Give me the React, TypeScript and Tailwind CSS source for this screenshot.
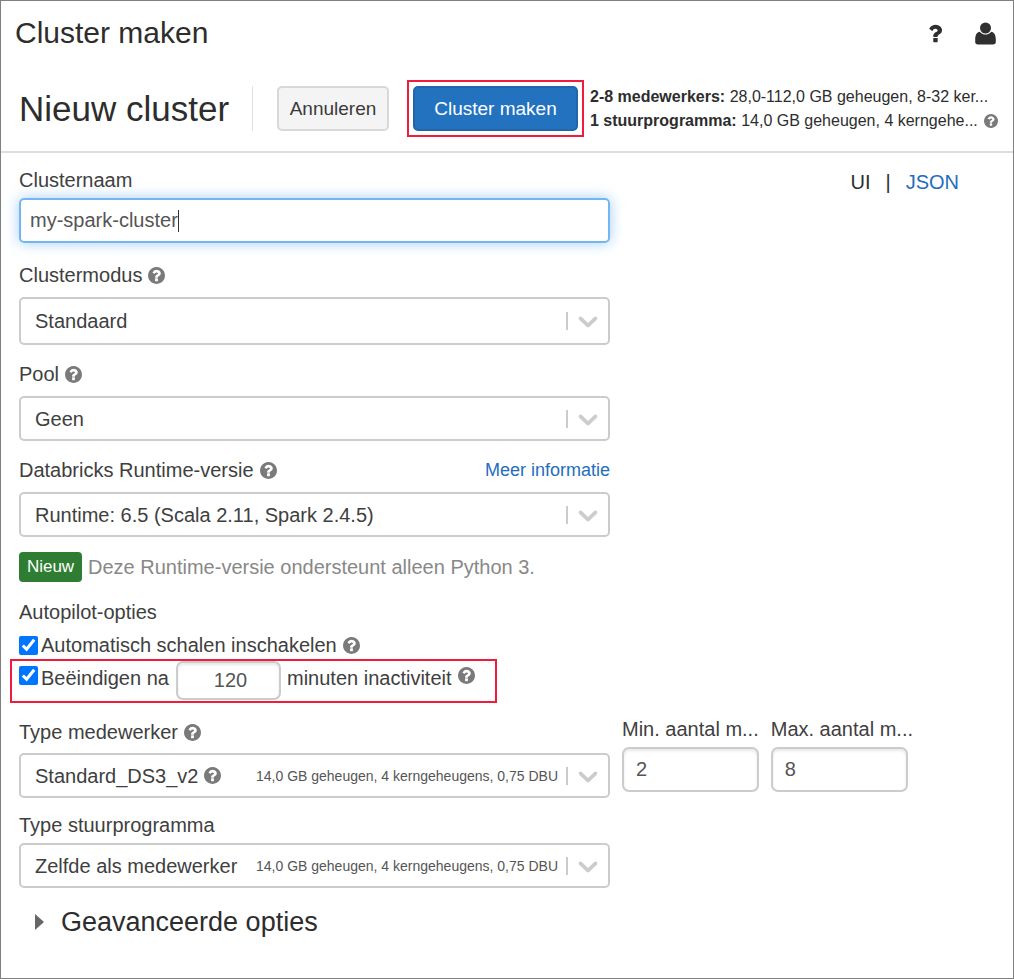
import type { ReactNode } from "react";

const FIELD_TEXT = "text-[#404040] text-[20px] leading-6";

function HelpIcon({ small = false }: { small?: boolean }) {
  return (
    <svg
      viewBox="128 128 1536 1536"
      aria-hidden="true"
      className={small ? "size-[14px] shrink-0 fill-[#7a7a7a]" : "size-[17px] shrink-0 fill-[#7a7a7a]"}
    >
      <path d="M1024 1376v-192q0-14-9-23t-23-9h-192q-14 0-23 9t-9 23v192q0 14 9 23t23 9h192q14 0 23-9t9-23zm256-672q0-88-55.5-163t-138.5-116-170-41q-243 0-371 213-15 24 8 42l132 100q7 6 19 6 16 0 25-12 53-68 86-92 34-24 86-24 48 0 85.5 26t37.5 59q0 38-20 61t-68 45q-63 28-115.5 86.5t-52.5 125.5v36q0 14 9 23t23 9h192q14 0 23-9t9-23q0-19 21.5-49.5t54.5-49.5q32-18 49-28.5t46-35 44.5-48 28-60.5 12.5-81zm384 192q0 209-103 385.5t-279.5 279.5-385.5 103-385.5-103-279.5-279.5-103-385.5 103-385.5 279.5-279.5 385.5-103 385.5 103 279.5 279.5 103 385.5z" />
    </svg>
  );
}

function QuestionIcon() {
  return (
    <svg viewBox="384 256 1020 1280" aria-hidden="true" className="h-[19px] w-[14px] fill-[#2f2f2f]">
      <path d="M1088 1256v240q0 16-12 28t-28 12h-240q-16 0-28-12t-12-28v-240q0-16 12-28t28-12h240q16 0 28 12t12 28zm316-600q0 54-15.500 101t-35 76.500-55 59.500-57.500 43.500-61 35.500q-41 23-68.500 65t-27.500 67q0 17-12 32.500t-28 15.500h-240q-15 0-25.500-18.500t-10.500-37.500v-45q0-83 65-156.500t143-108.500q59-27 84-56t25-76q0-42-46.500-74t-107.500-32q-65 0-108 29-35 25-107 115-13 16-31 16-12 0-25-8l-164-125q-13-10-15.500-25t5.500-28q160-266 464-266 80 0 161 31t146 83 106 127.500 41 158.500z" />
    </svg>
  );
}

function UserIcon() {
  return (
    <svg viewBox="0 0 21 23" aria-hidden="true" className="h-[23px] w-[21px] fill-[#2f2f2f]">
      <circle cx="10.5" cy="6" r="5.5" />
      <path d="M4.800 9.800C6.200 11.700 8.200 12.600 10.500 12.600S14.800 11.700 16.200 9.800C19.200 10.100 20.800 13.200 20.800 17.500V19.800C20.800 21.700 19.900 22.500 18 22.500H3C1.100 22.500 .2 21.700 .2 19.800V17.500C.2 13.200 1.800 10.100 4.800 9.800Z" />
    </svg>
  );
}

function Indicator() {
  return (
    <span className="pointer-events-none col-start-1 row-start-1 flex items-center gap-1 justify-self-end pr-1">
      <span className="h-[18px] w-[2px] bg-[#cccccc]" />
      <svg viewBox="0 0 20 20" aria-hidden="true" className="size-8 fill-[#cccccc]">
        <path d="M4.516 7.548c0.436-0.446 1.043-0.481 1.576 0l3.908 3.747 3.908-3.747c0.533-0.481 1.141-0.446 1.574 0 0.436 0.445 0.408 1.197 0 1.615-0.406 0.418-4.695 4.502-4.695 4.502-0.217 0.223-0.502 0.335-0.787 0.335s-0.57-0.112-0.789-0.335c0 0-4.287-4.084-4.695-4.502s-0.436-1.17 0-1.615z" />
      </svg>
    </span>
  );
}

function SelectBox({
  id,
  value,
  tall = false,
  help = false,
  detail,
}: {
  id: string;
  value: string;
  tall?: boolean;
  help?: boolean;
  detail?: string;
}) {
  return (
    <div
      className={
        tall
          ? "grid h-12 w-full items-center rounded-[5px] border-2 border-[#cccccc] bg-white"
          : "grid h-[45px] w-full items-center rounded-[5px] border-2 border-[#cccccc] bg-white"
      }
    >
      <select
        id={id}
        defaultValue={value}
        className={`col-start-1 row-start-1 h-full w-full appearance-none bg-transparent pl-[14px] outline-none ${FIELD_TEXT}`}
      >
        <option>{value}</option>
      </select>
      {help && (
        <span className="pointer-events-none col-start-1 row-start-1 pl-[183px]">
          <HelpIcon />
        </span>
      )}
      {detail && (
        <span className="pointer-events-none col-start-1 row-start-1 justify-self-end pr-[50px] text-[14px] leading-6 text-[#555555]">
          {detail}
        </span>
      )}
      <Indicator />
    </div>
  );
}

function Label({ htmlFor, help = false, children }: { htmlFor: string; help?: boolean; children: ReactNode }) {
  return (
    <div className="flex items-center gap-[6px]">
      <label htmlFor={htmlFor} className={`whitespace-nowrap ${FIELD_TEXT}`}>
        {children}
      </label>
      {help && <HelpIcon />}
    </div>
  );
}

function WorkerCount({ id, label, value }: { id: string; label: string; value: string }) {
  return (
    <div className="mb-[6px] flex w-[137px] flex-col gap-[6px]">
      <Label htmlFor={id}>{label}</Label>
      <input
        id={id}
        type="text"
        defaultValue={value}
        className="h-[45px] w-full rounded-[7px] border-2 border-[#cccccc] px-3 text-[20px] text-[#555555] shadow-[inset_0_2px_3px_#00000018] outline-none"
      />
    </div>
  );
}

export default function App() {
  const detail = "14,0 GB geheugen, 4 kerngeheugens, 0,75 DBU";
  return (
    <div className="min-h-screen border border-[#7f7f7f] bg-white font-['Liberation_Sans',Arial,sans-serif] text-[#2d2d2d]">
      <header className="border-b-2 border-[#dddddd]">
        <div className="flex items-center justify-between pt-4 pr-[17px] pl-[14px]">
          <h1 className="text-[30px] leading-8">Cluster maken</h1>
          <div className="flex items-center gap-[33px]">
            <button type="button" aria-label="Help">
              <QuestionIcon />
            </button>
            <button type="button" aria-label="Account">
              <UserIcon />
            </button>
          </div>
        </div>
        <div className="flex items-center pt-[31px] pb-[14px] pl-[18px]">
          <h2 className="w-[233px] shrink-0 text-[35px] leading-[46px]">Nieuw cluster</h2>
          <div className="h-[45px] w-px shrink-0 bg-[#e2e2e2]" />
          <button
            type="button"
            className="ml-6 h-[45px] w-28 shrink-0 rounded-[5px] border-2 border-[#d8d8d8] bg-[#f4f4f4] pt-[2px] text-[19px] text-[#3a3a3a]"
          >
            Annuleren
          </button>
          <div className="ml-[18px] shrink-0 border-2 border-[#f01c3c] p-1">
            <button
              type="button"
              className="block h-[45px] w-[165px] rounded-[5px] border-2 border-[#1f66aa] bg-[#2272bf] pt-[2px] text-[19px] text-white"
            >
              Cluster maken
            </button>
          </div>
          <div className="ml-[6px] text-[16px] leading-6 whitespace-nowrap">
            <p>
              <strong>2-8 medewerkers:</strong> 28,0-112,0 GB geheugen, 8-32 ker...
            </p>
            <p className="flex items-center gap-[6px]">
              <span>
                <strong>1 stuurprogramma:</strong> 14,0 GB geheugen, 4 kerngehe...
              </span>
              <HelpIcon small />
            </p>
          </div>
        </div>
      </header>

      <main className="flex items-start justify-between pt-[15px] pr-[54px] pb-10 pl-[18px]">
        <form className="w-[591px]">
          <div className="flex flex-col gap-[6px]">
            <Label htmlFor="name">Clusternaam</Label>
            <div className="relative">
              <input
                id="name"
                type="text"
                defaultValue="my-spark-cluster"
                className="block h-[45px] w-full rounded-[5px] border-2 border-[#74b6f2] px-[9px] text-[20px] text-[#555555] shadow-[0_0_14px_#74b6f2aa] outline-none"
              />
              <span className="absolute top-3 left-[159px] h-[22px] w-px bg-[#333333]" />
            </div>
          </div>

          <div className="mt-5 flex flex-col gap-[10px]">
            <Label htmlFor="mode" help>
              Clustermodus
            </Label>
            <SelectBox id="mode" value="Standaard" tall />
          </div>

          <div className="mt-[17px] flex flex-col gap-[10px]">
            <Label htmlFor="pool" help>
              Pool
            </Label>
            <SelectBox id="pool" value="Geen" />
          </div>

          <div className="mt-[17px] flex flex-col gap-[10px]">
            <div className="flex items-center justify-between">
              <Label htmlFor="runtime" help>
                Databricks Runtime-versie
              </Label>
              <a href="#runtime" className="text-[18px] leading-6 text-[#1f6dc0]">
                Meer informatie
              </a>
            </div>
            <SelectBox id="runtime" value="Runtime: 6.5 (Scala 2.11, Spark 2.4.5)" />
          </div>

          <div className="mt-[15px] flex items-center gap-[6px]">
            <span className="flex h-[30px] w-[63px] items-center justify-center rounded-[4px] bg-[#2e7d32] text-[17px] text-white">
              Nieuw
            </span>
            <span className="text-[20px] leading-6 text-[#888888]">Deze Runtime-versie ondersteunt alleen Python 3.</span>
          </div>

          <p className={`mt-[18px] ${FIELD_TEXT}`}>Autopilot-opties</p>
          <div className="mt-[9px] flex items-center gap-[3px]">
            <input id="autoscale" type="checkbox" defaultChecked className="size-[19px] accent-[#0075ff]" />
            <div className="flex items-center gap-[6px]">
              <label htmlFor="autoscale" className={FIELD_TEXT}>
                Automatisch schalen inschakelen
              </label>
              <HelpIcon />
            </div>
          </div>

          <div className="mt-[2px] -ml-[9px] flex h-11 w-[487px] items-start border-2 border-[#f01c3c] pl-[7px]">
            <input id="terminate" type="checkbox" defaultChecked className="mt-[5px] size-[19px] accent-[#0075ff]" />
            <label htmlFor="terminate" className={`mt-[5px] ml-[3px] w-[135px] ${FIELD_TEXT}`}>
              Beëindigen na
            </label>
            <input
              type="text"
              aria-label="Minuten"
              defaultValue="120"
              className="h-[39px] w-[105px] rounded-[7px] border-2 border-[#cccccc] pl-1 text-center text-[20px] text-[#555555] shadow-[inset_0_2px_3px_#00000018] outline-none"
            />
            <span className={`mt-[5px] ml-[6px] ${FIELD_TEXT}`}>minuten inactiviteit</span>
            <span className="mt-[6px] ml-[6px]">
              <HelpIcon />
            </span>
          </div>

          <div className="mt-[14px] flex items-end gap-3">
            <div className="flex w-full shrink-0 flex-col gap-[9px]">
              <Label htmlFor="worker" help>
                Type medewerker
              </Label>
              <SelectBox id="worker" value="Standard_DS3_v2" help detail={detail} />
            </div>
            <WorkerCount id="min" label="Min. aantal m..." value="2" />
            <WorkerCount id="max" label="Max. aantal m..." value="8" />
          </div>

          <div className="mt-[15px] flex flex-col gap-[6px]">
            <Label htmlFor="driver">Type stuurprogramma</Label>
            <SelectBox id="driver" value="Zelfde als medewerker" detail={detail} />
          </div>

          <button type="button" className="mt-[18px] ml-4 flex items-center gap-4 text-[27px] leading-8">
            <svg viewBox="0 0 10 16" aria-hidden="true" className="h-4 w-[10px] fill-[#666666]">
              <path d="M0 0 9 8 0 16Z" />
            </svg>
            Geavanceerde opties
          </button>
        </form>

        <nav className="flex gap-[15px] pt-[2px] text-[20px] leading-6">
          <span>UI</span>
          <span>|</span>
          <a href="#json" className="text-[#1f6dc0]">
            JSON
          </a>
        </nav>
      </main>
    </div>
  );
}
